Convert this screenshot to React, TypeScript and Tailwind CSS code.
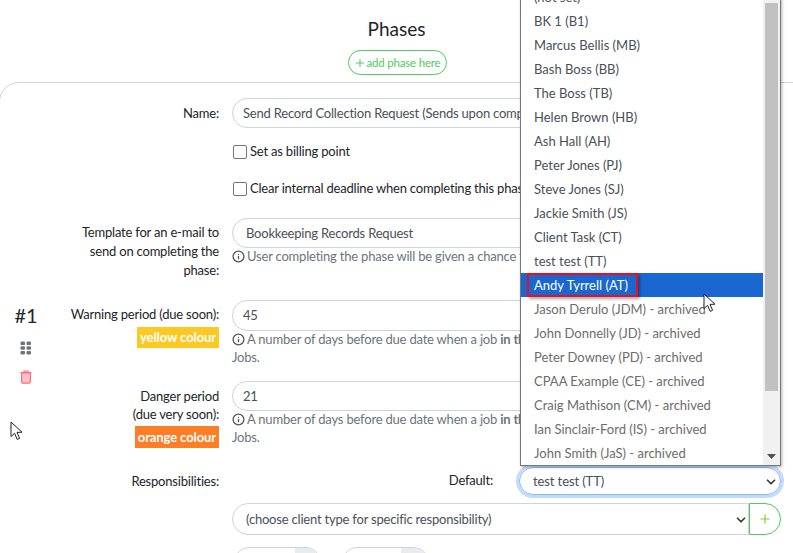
import { ChevronDown, Info, Plus } from 'lucide-react'

const people = [
  '(not set)',
  'BK 1 (B1)',
  'Marcus Bellis (MB)',
  'Bash Boss (BB)',
  'The Boss (TB)',
  'Helen Brown (HB)',
  'Ash Hall (AH)',
  'Peter Jones (PJ)',
  'Steve Jones (SJ)',
  'Jackie Smith (JS)',
  'Client Task (CT)',
  'test test (TT)',
  'Andy Tyrrell (AT)',
  'Jason Derulo (JDM) - archived',
  'John Donnelly (JD) - archived',
  'Peter Downey (PD) - archived',
  'CPAA Example (CE) - archived',
  'Craig Mathison (CM) - archived',
  'Ian Sinclair-Ford (IS) - archived',
  'John Smith (JaS) - archived',
]

const Cursor = ({ className }: { className: string }) => (
  <svg className={className} width="13" height="20" viewBox="0 0 13 20">
    <path d="M1 1 L1 15.5 L4.6 12.3 L7.2 18.4 L9.6 17.3 L7 11.4 L12 11.2 Z" fill="#fff" stroke="#222" strokeWidth="1" />
  </svg>
)

const Help = ({ children }: { children: React.ReactNode }) => (
  <div className="text-[13px] leading-[18px] tracking-[-0.2px] text-[#6c757d] whitespace-nowrap">
    <Info size={13} strokeWidth={2.4} className="inline-block mr-[2px] -mt-[2px] text-[#555]" />
    {children}
  </div>
)

const TextBox = ({ value, pad = 'pl-[10px]', height = 'h-[30px]' }: { value: string; pad?: string; height?: string }) => (
  <div className={`${height} pt-px rounded-[15px] border border-[#ced4da] bg-white flex items-center text-[13px] tracking-[-0.2px] text-[#495057] whitespace-nowrap overflow-hidden ${pad}`}>
    {value}
  </div>
)

const Label = ({ children }: { children: React.ReactNode }) => (
  <div className="w-[171px] shrink-0 text-right text-[13px] leading-[19px] tracking-[-0.2px] text-[#212529]">{children}</div>
)

const Check = ({ label }: { label: string }) => (
  <label className="flex items-center gap-[3px] text-[13px] tracking-[-0.2px] text-[#212529] whitespace-nowrap">
    <span className="ml-px w-[14px] h-[14px] rounded-[2px] border border-[#767676] bg-white" />
    {label}
  </label>
)

export default function App() {
  return (
    <div className="relative w-[793px] h-[553px] overflow-hidden bg-white font-['Lato','Noto_Sans',sans-serif]">
      <div className="pt-[17px] flex flex-col items-center">
        <h1 className="text-[19px] leading-[24px] text-[#212529]">Phases</h1>
        <button className="mt-[9px] ml-px h-[25px] w-[99px] rounded-full border border-[#4ccb5e] flex items-center justify-center gap-[1px] text-[11.5px] tracking-[-0.2px] text-[#4ccb5e] whitespace-nowrap">
          <Plus size={12} /> add phase here
        </button>
      </div>

      <div className="mt-[7px] -ml-[1px] -mr-[20px] h-[500px] rounded-t-[20px] border border-[#ced4da] flex">
        <div className="w-[48px] shrink-0 pt-[220px] flex flex-col items-center">
          <div className="text-[20px] leading-[24px] text-[#212529] ml-[4px]">#1</div>
          <svg className="mt-[14px] ml-[3px]" width="12" height="14" viewBox="0 0 12 14" fill="#6c757d">
            <rect x="0.5" y="0.5" width="4.5" height="3.6" rx="1.2" />
            <rect x="6.5" y="0.5" width="4.5" height="3.6" rx="1.2" />
            <rect x="0.5" y="5.2" width="4.5" height="3.6" rx="1.2" />
            <rect x="6.5" y="5.2" width="4.5" height="3.6" rx="1.2" />
            <rect x="0.5" y="9.9" width="4.5" height="3.6" rx="1.2" />
            <rect x="6.5" y="9.9" width="4.5" height="3.6" rx="1.2" />
          </svg>
          <svg className="mt-[15px] ml-[3px]" width="12" height="14" viewBox="0 0 12 14" fill="none" stroke="#ff6b7a" strokeWidth="1.2">
            <path d="M0.5 2.6 H11.5 M4 2.4 V1 H8 V2.4" />
            <rect x="1.6" y="2.8" width="8.8" height="10.4" rx="1.5" fill="#ffc2c9" />
          </svg>
        </div>

        <div className="flex-1 min-w-0 pt-[15px] pr-[31px] flex flex-col">
          <div className="flex gap-[13px] h-[30px]">
            <div className="pt-[6px]"><Label>Name:</Label></div>
            <div className="flex-1 min-w-0"><TextBox value="Send Record Collection Request (Sends upon completion)" /></div>
          </div>

          <div className="ml-[184px] mt-[14px] h-[19px] flex items-center"><Check label="Set as billing point" /></div>
          <div className="ml-[184px] mt-[18px] h-[19px] flex items-center"><Check label="Clear internal deadline when completing this phase" /></div>

          <div className="flex gap-[13px] mt-[20px]">
            <div className="pt-[5px]">
              <Label>Template for an e-mail to<br />send on completing the<br />phase:</Label>
            </div>
            <div className="flex-1 min-w-0">
              <TextBox value="Bookkeeping Records Request" pad="pl-[13px]" />
              <div className="mt-[-1px]"><Help>User completing the phase will be given a chance to review</Help></div>
            </div>
          </div>

          <div className="flex gap-[13px] mt-[20px]">
            <div className="pt-[5px] flex flex-col items-end">
              <Label>Warning period (due soon):</Label>
              <span className="mt-[3px] h-[21px] px-[3px] bg-[#fcc923] text-white font-bold text-[13px] tracking-[-0.1px] leading-[21px]">yellow colour</span>
            </div>
            <div className="flex-1 min-w-0">
              <TextBox value="45" height="h-[31px]" />
              <div className="mt-[-1px]">
                <Help>A number of days before due date when a job <b>in this phase</b> is marked due soon on</Help>
                <div className="text-[13px] leading-[18px] tracking-[-0.2px] text-[#6c757d]">Jobs.</div>
              </div>
            </div>
          </div>

          <div className="flex gap-[13px] mt-[15px]">
            <div className="pt-[6px] flex flex-col items-end">
              <Label><div className="leading-[18px]">Danger period<br />(due very soon):</div></Label>
              <span className="mt-[3px] h-[22px] px-[3px] bg-[#fd7e26] text-white font-bold text-[13px] tracking-[-0.1px] leading-[22px]">orange colour</span>
            </div>
            <div className="flex-1 min-w-0">
              <TextBox value="21" />
              <div className="mt-[-1px]">
                <Help>A number of days before due date when a job <b>in this phase</b> is marked overdue on</Help>
                <div className="text-[13px] leading-[19px] tracking-[-0.2px] text-[#6c757d]">Jobs.</div>
              </div>
            </div>
          </div>

          <div className="flex items-center mt-[19px] h-[28px]">
            <Label>Responsibilities:</Label>
            <div className="ml-[229px] w-[45px] text-right text-[13px] tracking-[-0.2px] text-[#212529]">Default:</div>
            <div className="ml-[26px] flex-1 h-[28px] pt-px rounded-[14px] border border-[#86b7fe] shadow-[0_0_0_3px_rgba(13,110,253,0.25)] flex items-center justify-between pl-[13px] pr-[2px] text-[13px] tracking-[-0.1px] text-[#495057]">
              test test (TT)
              <ChevronDown size={14} strokeWidth={3} className="text-[#343a40]" />
            </div>
          </div>

          <div className="ml-[184px] mt-[8px] flex h-[32px]">
            <div className="flex-1 pt-px rounded-l-[16px] border border-[#ced4da] flex items-center justify-between pl-[13px] text-[13px] tracking-[-0.2px] text-[#495057]">
              (choose client type for specific responsibility)
              <ChevronDown size={14} strokeWidth={3} className="text-[#343a40]" />
            </div>
            <div className="w-[32px] rounded-r-[16px] border border-[#4ccb5e] flex items-center justify-center text-[#8dc63f]">
              <Plus size={14} />
            </div>
          </div>

          <div className="ml-[186px] mt-[12px] flex gap-[21px]">
            <div className="w-[87px] h-[30px] rounded-[15px] border border-[#ced4da] flex justify-end overflow-hidden">
              <div className="w-[25px] bg-[#e9ecef]" />
            </div>
            <div className="w-[87px] h-[30px] rounded-[15px] border border-[#ced4da] flex justify-end overflow-hidden">
              <div className="w-[27px] bg-[#e9ecef]" />
            </div>
          </div>
        </div>
      </div>

      <div className="absolute left-[520px] top-[-16px] w-[261px] h-[482px] border border-[#767676] bg-white shadow-[1px_1px_3px_rgba(0,0,0,0.3)] flex">
        <ul className="flex-1 min-w-0">
          {people.map((name) => {
            const selected = name === 'Andy Tyrrell (AT)'
            return (
              <li
                key={name}
                className={`relative h-6 pt-px pl-[13px] flex items-center text-[13px] whitespace-nowrap ${
                  selected ? 'bg-[#1a67d2] text-white' : name.includes('archived') ? 'text-[#6c6c6c]' : 'text-[#495057]'
                }`}
              >
                {name}
                {selected && (
                  <span className="absolute left-[6px] top-0 w-[111px] h-[24px] border-2 border-[#e8101c] shadow-[2px_2px_3px_rgba(0,0,0,0.35)]" />
                )}
              </li>
            )
          })}
        </ul>
        <div className="w-[17px] shrink-0 bg-[#f1f1f1] relative">
          <div className="absolute left-[2px] top-[18px] w-[13px] h-[388px] bg-[#c1c1c1]" />
          <svg className="absolute left-[4px] bottom-[6px]" width="9" height="5" viewBox="0 0 9 5" fill="#505050">
            <path d="M0 0 H9 L4.5 5 Z" />
          </svg>
        </div>
      </div>

      <Cursor className="absolute left-[703px] top-[293px]" />
      <Cursor className="absolute left-[10px] top-[421px]" />
    </div>
  )
}
